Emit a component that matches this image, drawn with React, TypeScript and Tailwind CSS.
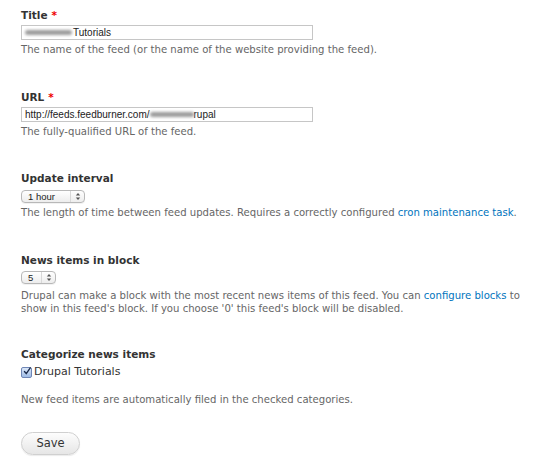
import React from 'react';

const font = { fontFamily: '"DejaVu Sans", Verdana, sans-serif' };
const inputFont = { fontFamily: '"Liberation Sans", Arial, sans-serif' };

function Label({ children, required }: { children: React.ReactNode; required?: boolean }) {
  return (
    <div className="text-[10.5px] font-bold leading-[14px] text-[#333]">
      {children}
      {required && <span className="ml-1 text-[#e00]">*</span>}
    </div>
  );
}

function Desc({ children }: { children: React.ReactNode }) {
  return <div className="text-[10.1px] leading-[13px] text-[#666]">{children}</div>;
}

function Blur({ w }: { w: string }) {
  return <span className={`inline-block h-[5px] rounded-full bg-[#9a9a9a] blur-[1.5px] ${w}`} />;
}

function Arrows() {
  return (
    <svg width="6" height="9" viewBox="0 0 6 9" className="text-[#555]">
      <path d="M0.8 3.6 L3 1 L5.2 3.6 Z" fill="currentColor" />
      <path d="M0.8 5.4 L3 8 L5.2 5.4 Z" fill="currentColor" />
    </svg>
  );
}

function Select({ value, width }: { value: string; width: string }) {
  return (
    <div
      className={`flex h-[13px] ${width} items-center rounded-[4px] border border-[#b8b8b8] bg-gradient-to-b from-white to-[#ededed] text-[9.5px] text-[#222] shadow-[0_1px_0_rgba(0,0,0,0.05)]`}
      style={inputFont}
    >
      <span className="flex-1 pl-[6px] leading-none">{value}</span>
      <span className="flex h-full w-[14px] items-center justify-center border-l border-[#d8d8d8]">
        <Arrows />
      </span>
    </div>
  );
}

function TextInput({ children }: { children: React.ReactNode }) {
  return (
    <div
      className="mt-[3px] flex h-[15px] w-[292px] items-center border border-[#c6c6c6] bg-white pl-[3px] text-[10px] text-[#222]"
      style={inputFont}
    >
      {children}
    </div>
  );
}

export default function App() {
  return (
    <div className="h-[470px] w-[540px] bg-white pl-[21px] pt-[8px]" style={font}>
      {/* Title */}
      <Label required>Title</Label>
      <TextInput>
        <Blur w="w-[47px]" />
        <span className="ml-[1px]">Tutorials</span>
      </TextInput>
      <div className="mt-[3px]">
        <Desc>The name of the feed (or the name of the website providing the feed).</Desc>
      </div>

      {/* URL */}
      <div className="mt-[34px]">
        <Label required>URL</Label>
      </div>
      <TextInput>
        <span>http://feeds.feedburner.com/</span>
        <Blur w="w-[44px]" />
        <span>rupal</span>
      </TextInput>
      <div className="mt-[3px]">
        <Desc>The fully-qualified URL of the feed.</Desc>
      </div>

      {/* Update interval */}
      <div className="mt-[33px]">
        <Label>Update interval</Label>
      </div>
      <div className="mt-[5px]">
        <Select value="1 hour" width="w-[64px]" />
      </div>
      <div className="mt-[3px]">
        <Desc>
          The length of time between feed updates. Requires a correctly configured{' '}
          <span className="text-[#0074bd]">cron maintenance task</span>.
        </Desc>
      </div>

      {/* News items */}
      <div className="mt-[34px]">
        <Label>News items in block</Label>
      </div>
      <div className="mt-[4px]">
        <Select value="5" width="w-[35px]" />
      </div>
      <div className="mt-[5px] whitespace-nowrap">
        <Desc>
          Drupal can make a block with the most recent news items of this feed. You can{' '}
          <span className="text-[#0074bd]">configure blocks</span> to
          <br />
          show in this feed's block. If you choose '0' this feed's block will be disabled.
        </Desc>
      </div>

      {/* Categorize */}
      <div className="mt-[32px]">
        <Label>Categorize news items</Label>
      </div>
      <div className="mt-[3px] flex items-center gap-[1px]">
        <span className="flex h-[11px] w-[11px] items-center justify-center rounded-[2px] border border-[#6f86b5] bg-gradient-to-b from-[#dbe7f8] to-[#9fbce6]">
          <svg width="11" height="11" viewBox="0 0 11 11" className="-mt-[2px] ml-[1px]">
            <path d="M2 5.5 L4.5 8.5 L10 0.5" fill="none" stroke="#1b2a4a" strokeWidth="1.8" strokeLinecap="round" strokeLinejoin="round" />
          </svg>
        </span>
        <span className="ml-[1px] text-[11px] leading-[16px] text-[#333]">Drupal Tutorials</span>
      </div>
      <div className="mt-[13px]">
        <Desc>New feed items are automatically filed in the checked categories.</Desc>
      </div>

      {/* Save */}
      <button className="mt-[26px] flex h-[23px] w-[59px] items-center justify-center rounded-full border border-[#d0d0d0] bg-gradient-to-b from-[#fdfdfd] to-[#e6e6e6] text-[11.5px] text-[#333] shadow-[0_1px_1px_rgba(0,0,0,0.08)]">
        Save
      </button>
    </div>
  );
}
